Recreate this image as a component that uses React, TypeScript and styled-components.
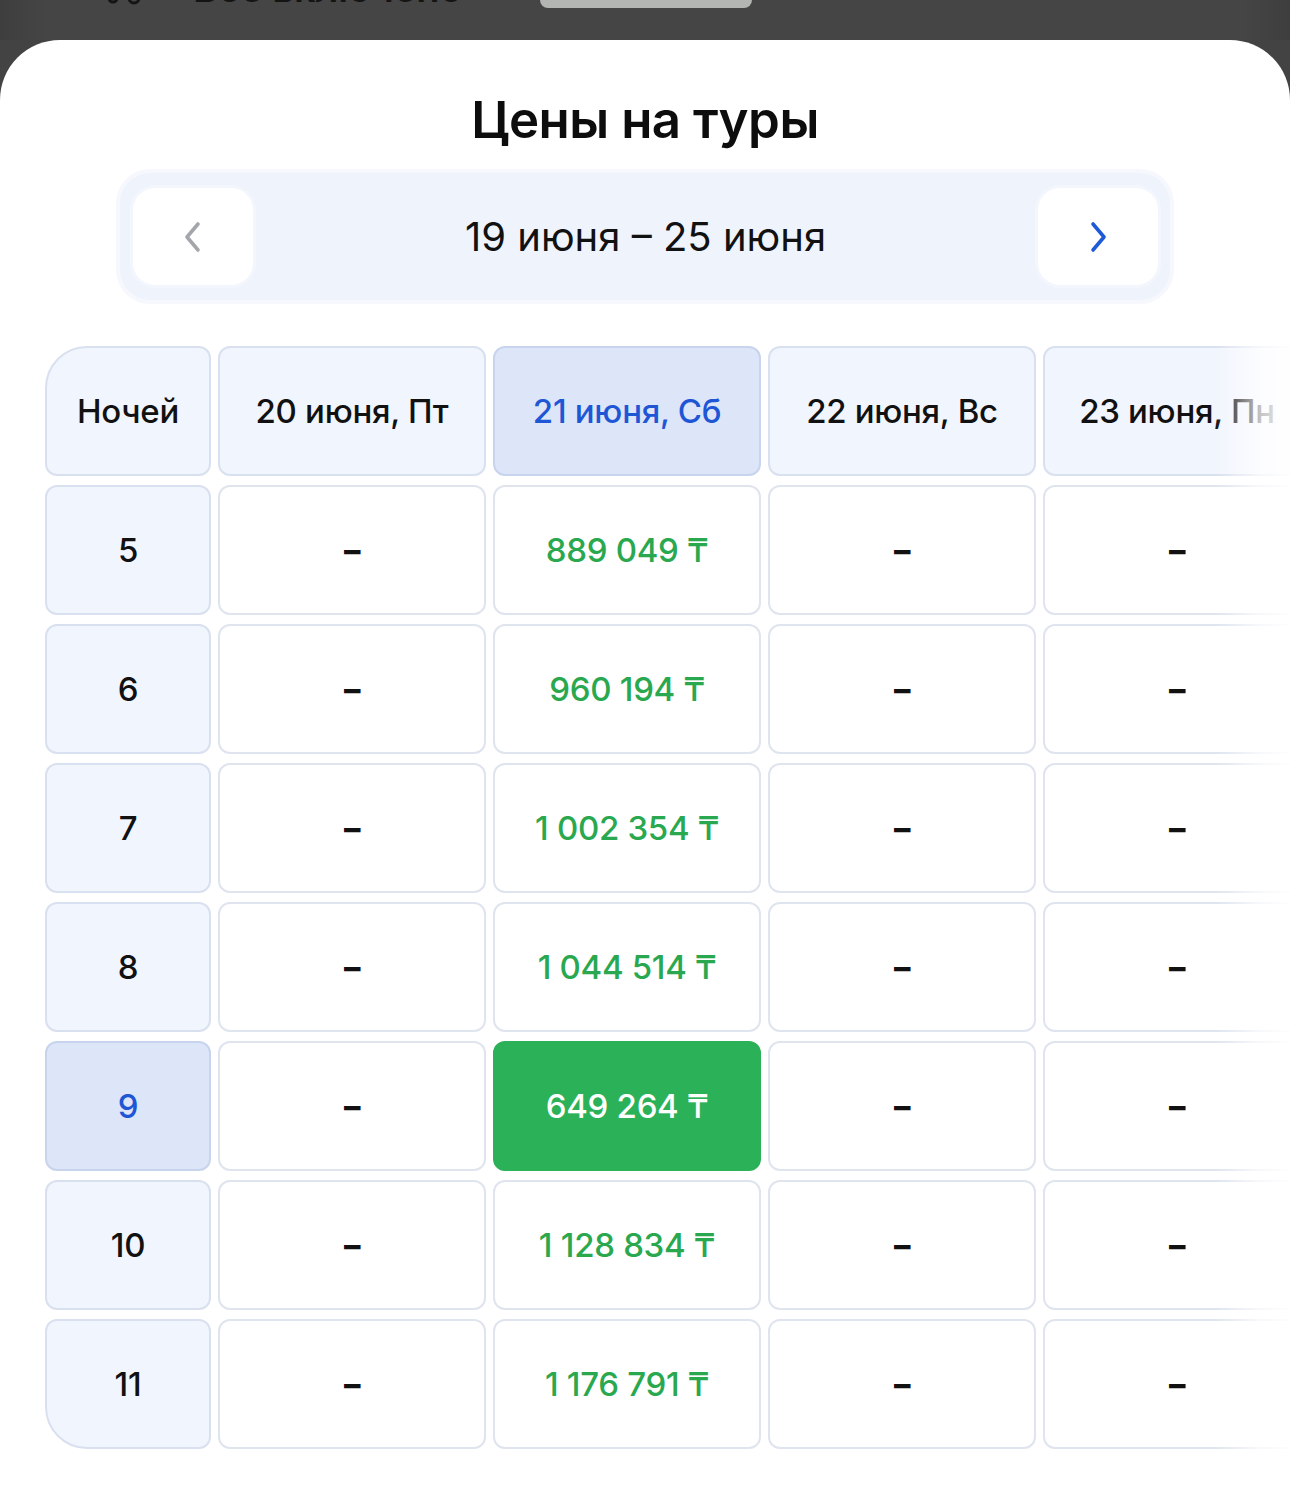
import React from "react";
import styled, { createGlobalStyle, css } from "styled-components";

const Global = createGlobalStyle`
  html, body { margin: 0; padding: 0; background: #434343; }
  body { font-family: Inter, "Noto Sans", "DejaVu Sans", sans-serif; color: #111; }
  * { box-sizing: border-box; }
`;

const Page = styled.div`
  width: 1290px;
  min-height: 1491px;
  display: flex;
  flex-direction: column;
  background: #434343;
  overflow: hidden;
`;

const BackStrip = styled.div`
  height: 40px;
  overflow: hidden;
  display: flex;
  align-items: flex-end;
  background: linear-gradient(90deg, #3e3e3e 0, #454545 45px, #454545 1243px, #3e3e3e 1290px);
`;

const BackRow = styled.div`
  display: flex;
  align-items: flex-end;
  height: 40px;
  margin-top: -32px;
  padding-left: 107px;
  transform: translateY(-32px);
`;

const BackLabel = styled.span`
  margin-left: 43px;
  font-size: 38px;
  font-weight: 600;
  line-height: 40px;
  color: #141414;
`;

const Handle = styled.div`
  margin-left: 77px;
  width: 212px;
  height: 40px;
  border-radius: 8px;
  background: #b3b5b2;
`;

const Sheet = styled.div`
  flex: 1;
  background: #fff;
  border-radius: 60px 60px 0 0;
  display: flex;
  flex-direction: column;
  align-items: center;
  padding-top: 49px;
`;

const Title = styled.h1`
  margin: 0;
  font-size: 51px;
  line-height: 62px;
  font-weight: 600;
  letter-spacing: -0.5px;
  color: #0d0d0d;
`;

const Nav = styled.div`
  margin-top: 22px;
  width: 1050px;
  height: 127px;
  border-radius: 30px;
  background: #eff4fc;
  box-shadow: 0 0 0 4px #f6f8fd;
  display: flex;
  align-items: center;
  justify-content: space-between;
  padding: 0 12px 0 13px;
`;

const NavButton = styled.div`
  width: 120px;
  height: 97px;
  border-radius: 22px;
  background: #fff;
  display: flex;
  align-items: center;
  justify-content: center;
  box-shadow: 0 0 0 3px #f3f6fd;
`;

const RangeText = styled.span`
  font-size: 40px;
  font-weight: 400;
  color: #111;
  letter-spacing: 0;
`;

const TableWrap = styled.div`
  position: relative;
  margin-top: 46px;
  width: 1290px;
  overflow: hidden;
  padding-left: 45px;
`;

const Grid = styled.div`
  display: grid;
  grid-template-columns: 166px repeat(4, 268px);
  column-gap: 7px;
  row-gap: 9px;
  width: max-content;
`;

type CellProps = {
  $kind: "corner" | "head" | "headSel" | "night" | "nightSel" | "empty" | "price" | "best";
  $round?: "tl" | "bl";
};

const Cell = styled.div<CellProps>`
  height: 130px;
  border-radius: 12px;
  border: 2px solid #dfe4ee;
  background: #fff;
  display: flex;
  align-items: center;
  justify-content: center;
  font-size: 33px;
  font-weight: 500;
  color: #111;
  white-space: nowrap;
  letter-spacing: -0.3px;
  ${(p) =>
    (p.$kind === "corner" || p.$kind === "head" || p.$kind === "night") &&
    css`
      background: #f1f5fd;
      border-color: #d9e0ef;
    `}
  ${(p) =>
    (p.$kind === "headSel" || p.$kind === "nightSel") &&
    css`
      background: #dce6f8;
      border-color: #c8d4ee;
      color: #1f56d6;
    `}
  ${(p) =>
    p.$kind === "price" &&
    css`
      color: #2aa84f;
    `}
  ${(p) =>
    p.$kind === "best" &&
    css`
      background: #2bb157;
      border-color: #2bb157;
      color: #fff;
    `}
  ${(p) =>
    p.$kind === "empty" &&
    css`
      font-weight: 800;
      font-size: 33px;
    `}
  ${(p) => p.$round === "tl" && css`border-top-left-radius: 42px;`}
  ${(p) => p.$round === "bl" && css`border-bottom-left-radius: 42px;`}
`;

const Fade = styled.div`
  position: absolute;
  top: 0;
  right: 0;
  bottom: 0;
  width: 75px;
  pointer-events: none;
  background: linear-gradient(90deg, rgba(255, 255, 255, 0) 0%, rgba(255, 255, 255, 0.75) 60%, rgba(255, 255, 255, 0.95) 100%);
`;

const Chevron = ({ dir, color }: { dir: "left" | "right"; color: string }) => (
  <svg width="22" height="34" viewBox="0 0 22 34" fill="none">
    <path
      d={dir === "left" ? "M16 4 L5 17 L16 30" : "M6 4 L17 17 L6 30"}
      stroke={color}
      strokeWidth="3.6"
      strokeLinecap="round"
      strokeLinejoin="round"
    />
  </svg>
);

const Cutlery = () => (
  <svg width="43" height="40" viewBox="0 0 43 40" fill="none">
    <path d="M2 0 V30 a4 4 0 0 0 8 0 V0" stroke="#141414" strokeWidth="3" />
    <path d="M22 0 V30 a5 5 0 0 0 10 0 V0" stroke="#141414" strokeWidth="3" />
  </svg>
);

const days = ["20 июня, Пт", "21 июня, Сб", "22 июня, Вс", "23 июня, Пн"];
const rows: { n: number; price: string }[] = [
  { n: 5, price: "889 049 ₸" },
  { n: 6, price: "960 194 ₸" },
  { n: 7, price: "1 002 354 ₸" },
  { n: 8, price: "1 044 514 ₸" },
  { n: 9, price: "649 264 ₸" },
  { n: 10, price: "1 128 834 ₸" },
  { n: 11, price: "1 176 791 ₸" },
];

export default function App() {
  return (
    <>
      <Global />
      <Page>
        <BackStrip>
          <BackRow>
            <Cutlery />
            <BackLabel>Все включено</BackLabel>
            <Handle />
          </BackRow>
        </BackStrip>
        <Sheet>
          <Title>Цены на туры</Title>
          <Nav>
            <NavButton>
              <Chevron dir="left" color="#a3a7ab" />
            </NavButton>
            <RangeText>19 июня – 25 июня</RangeText>
            <NavButton>
              <Chevron dir="right" color="#1f5bd6" />
            </NavButton>
          </Nav>
          <TableWrap>
            <Grid>
              <Cell $kind="corner" $round="tl">Ночей</Cell>
              {days.map((d, i) => (
                <Cell key={d} $kind={i === 1 ? "headSel" : "head"}>
                  {d}
                </Cell>
              ))}
              {rows.map((r, ri) => (
                <React.Fragment key={r.n}>
                  <Cell
                    $kind={r.n === 9 ? "nightSel" : "night"}
                    $round={ri === rows.length - 1 ? "bl" : undefined}
                  >
                    {r.n}
                  </Cell>
                  <Cell $kind="empty">–</Cell>
                  <Cell $kind={r.n === 9 ? "best" : "price"}>{r.price}</Cell>
                  <Cell $kind="empty">–</Cell>
                  <Cell $kind="empty">–</Cell>
                </React.Fragment>
              ))}
            </Grid>
            <Fade />
          </TableWrap>
        </Sheet>
      </Page>
    </>
  );
}
